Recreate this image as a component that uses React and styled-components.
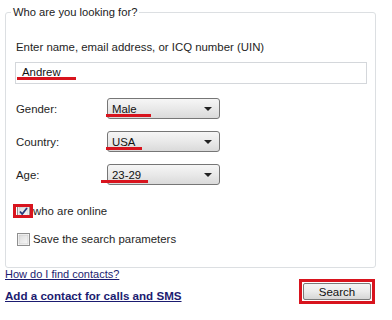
import React from 'react';
import styled, { createGlobalStyle } from 'styled-components';

const GlobalStyle = createGlobalStyle`
  body {
    margin: 0;
    background: #fff;
    font-family: "Liberation Sans", Arial, sans-serif;
    font-size: 11.4px;
    color: #1e1e1e;
  }
`;

const RED = '#d8141e';

const Page = styled.div`
  width: 392px;
  height: 320px;
  padding: 5px 16px 0 5px;
  box-sizing: border-box;
`;

const Group = styled.fieldset`
  margin: 0;
  padding: 0;
  height: 263px;
  box-sizing: border-box;
  border: 1px solid #dcdfe2;
  border-radius: 3px;
`;

const Legend = styled.legend`
  margin-left: 5px;
  padding: 0 2px;
  font-size: 11.2px;
  line-height: 15px;
  color: #222;
`;

const Body = styled.div`
  padding: 20px 8px 0 10px;
`;

const Caption = styled.div`
  line-height: 15px;
  margin-bottom: 7px;
`;

const TextBox = styled.div`
  position: relative;
  margin-left: -1px;
  height: 22px;
  box-sizing: border-box;
  border: 1px solid #d4d7db;
  padding: 0 6px;
  line-height: 19px;
  color: #111;
`;

const Mark = styled.span`
  position: absolute;
  left: ${p => p.$left}px;
  bottom: ${p => p.$bottom}px;
  width: ${p => p.$width}px;
  height: 3px;
  background: ${RED};
`;

const Rows = styled.div`
  display: flex;
  flex-direction: column;
  gap: 12px;
  margin-top: 14px;
`;

const Row = styled.div`
  display: flex;
  align-items: center;
`;

const Label = styled.div`
  width: 91px;
`;

const Select = styled.div`
  position: relative;
  width: 113px;
  height: 21px;
  box-sizing: border-box;
  border: 1px solid #767676;
  border-radius: 3px;
  background: linear-gradient(#f6f6f6, #e9e9e9 50%, #dadada);
  display: flex;
  align-items: center;
  justify-content: space-between;
  padding: 0 7px 0 4px;
  color: #111;
`;

const Arrow = styled.span`
  width: 0;
  height: 0;
  border-left: 4px solid transparent;
  border-right: 4px solid transparent;
  border-top: 4px solid #222;
`;

const Checks = styled.div`
  display: flex;
  flex-direction: column;
  gap: 13px;
  margin-top: 19px;
`;

const CheckRow = styled.label`
  display: flex;
  align-items: center;
  gap: 3px;
  line-height: 15px;
  padding-left: 1px;
`;

const BoxWrap = styled.span`
  position: relative;
  display: flex;
`;

const Frame = styled.span`
  position: absolute;
  left: -4px;
  top: -1px;
  width: 20px;
  height: 14px;
  box-sizing: border-box;
  border: 3px solid ${RED};
`;

const Footer = styled.div`
  display: flex;
  justify-content: space-between;
  align-items: flex-start;
`;

const Links = styled.div`
  display: flex;
  flex-direction: column;
  gap: 8px;
  margin-top: -1px;
`;

const Link = styled.a`
  color: #1b1b70;
  text-decoration: underline;
  font-size: ${p => (p.$bold ? '11.6px' : '11px')};
  font-weight: ${p => (p.$bold ? 700 : 400)};
  line-height: 14px;
`;

const ButtonFrame = styled.div`
  margin-top: 11px;
  margin-right: 1px;
  border: 3px solid ${RED};
  padding: 1px;
`;

const Button = styled.button`
  display: block;
  width: 68px;
  height: 17px;
  padding: 0;
  border: 1px solid #7a7a7a;
  border-radius: 2px;
  background: linear-gradient(#f4f4f4, #ebebeb 50%, #d6d6d6);
  font: 11.5px "Liberation Sans", Arial, sans-serif;
  color: #111;
`;

const CheckBox = ({ checked }) => (
  <svg width="13" height="13" viewBox="0 0 13 13">
    <defs>
      <linearGradient id={checked ? 'cg1' : 'cg2'} x1="0" y1="0" x2="1" y2="1">
        <stop offset="0" stopColor="#dcdcdc" />
        <stop offset="1" stopColor="#f8f8f8" />
      </linearGradient>
    </defs>
    <rect x="0.5" y="0.5" width="12" height="12" fill="#fff" stroke="#8f8f8f" />
    <rect x="2" y="2" width="9" height="9" fill={`url(#${checked ? 'cg1' : 'cg2'})`} stroke="#c4c4c4" strokeWidth="0.6" />
    {checked && (
      <path d="M3 6.5 L5.2 9 L10 3" fill="none" stroke="#283a7a" strokeWidth="1.8" />
    )}
  </svg>
);

const selects = [
  { label: 'Gender:', value: 'Male', left: -2, width: 45 },
  { label: 'Country:', value: 'USA', left: -2, width: 36 },
  { label: 'Age:', value: '23-29', left: -7, width: 47 },
];

export default function App() {
  return (
    <Page>
      <GlobalStyle />
      <Group>
        <Legend>Who are you looking for?</Legend>
        <Body>
          <Caption>Enter name, email address, or ICQ number (UIN)</Caption>
          <TextBox>
            Andrew
            <Mark $left={1} $bottom={3} $width={59} />
          </TextBox>
          <Rows>
            {selects.map(s => (
              <Row key={s.label}>
                <Label>{s.label}</Label>
                <Select>
                  {s.value}
                  <Arrow />
                  <Mark $left={s.left} $bottom={1} $width={s.width} />
                </Select>
              </Row>
            ))}
          </Rows>
          <Checks>
            <CheckRow>
              <BoxWrap>
                <CheckBox checked />
                <Frame />
              </BoxWrap>
              who are online
            </CheckRow>
            <CheckRow>
              <BoxWrap>
                <CheckBox />
              </BoxWrap>
              Save the search parameters
            </CheckRow>
          </Checks>
        </Body>
      </Group>
      <Footer>
        <Links>
          <Link href="#">How do I find contacts?</Link>
          <Link href="#" $bold>Add a contact for calls and SMS</Link>
        </Links>
        <ButtonFrame>
          <Button>Search</Button>
        </ButtonFrame>
      </Footer>
    </Page>
  );
}
